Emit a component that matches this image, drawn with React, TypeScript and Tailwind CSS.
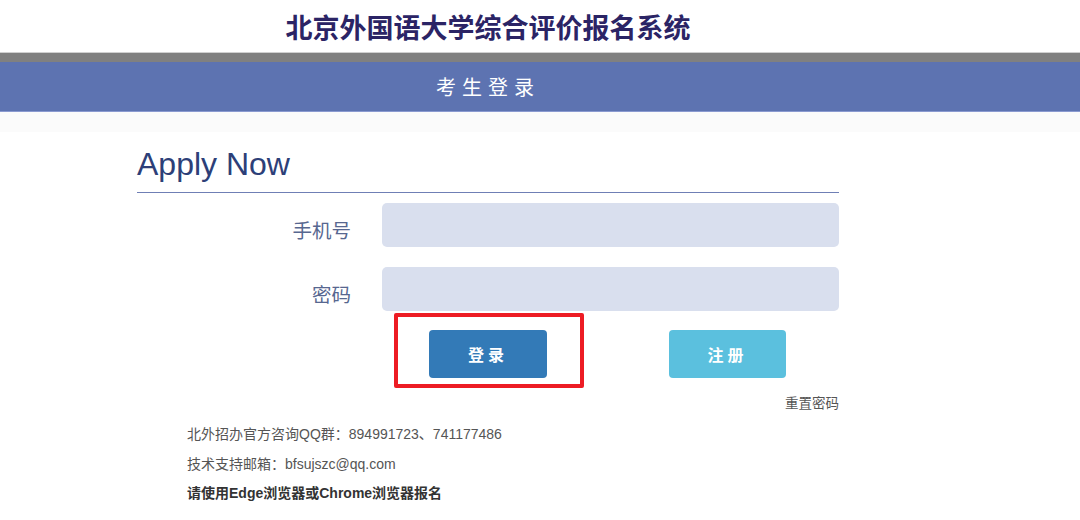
const App = () => {
    return (
        <div className="min-h-[520px] bg-white font-['Liberation_Sans','Noto_Sans_CJK_SC',sans-serif]">
            <div className="w-[976px]">
                <h1 className="h-[52px] pt-[9px] text-center text-[27px] leading-[36px] font-bold text-[#2b2465] font-['Noto_Sans_CJK_SC',sans-serif]">
                    北京外国语大学综合评价报名系统
                </h1>
            </div>
            <div className="h-[10px] bg-[#808080] border-t border-[#d0d0d0]" />
            <div className="h-[50px] bg-[#5d73b1] border-b border-[#8a9ad0]">
                <div className="w-[976px] text-center text-[20px] leading-[50px] tracking-[6px] text-white font-['Noto_Sans_CJK_SC',sans-serif]">
                    考生登录
                </div>
            </div>
            <div className="h-[20px] bg-[#fbfbfb]" />

            <div className="w-[976px]">
                <div className="w-[702px] mx-auto pt-[12px]">
                    <h2 className="text-[32px] leading-[40px] text-[#2d3f78] pb-[8px] border-b border-[#6f7fb5]">
                        Apply Now
                    </h2>

                    <div className="flex flex-col gap-[20px] mt-[10px]">
                        <div className="flex items-center">
                            <label className="w-[245px] pr-[31px] pt-[10px] text-right text-[19.5px] text-[#576790] font-['Noto_Sans_CJK_SC',sans-serif]">手机号</label>
                            <input className="w-[457px] h-[44px] rounded-[5px] bg-[#d9dfee] outline-none px-3" />
                        </div>
                        <div className="flex items-center">
                            <label className="w-[245px] pr-[31px] pt-[10px] text-right text-[19.5px] text-[#576790] font-['Noto_Sans_CJK_SC',sans-serif]">密码</label>
                            <input type="password" className="w-[457px] h-[44px] rounded-[5px] bg-[#d9dfee] outline-none px-3" />
                        </div>
                    </div>

                    <div className="flex mt-[19px] ml-[292px]">
                        <div className="relative">
                            <button className="w-[118px] h-[48px] rounded-[4px] bg-[#337ab7] text-white text-[16px] font-bold tracking-[4px] font-['Noto_Sans_CJK_SC',sans-serif]">
                                登录
                            </button>
                            <div className="absolute left-[-35px] top-[-17px] w-[190px] h-[75px] border-4 border-[#ed1c24] rounded-[2px]" />
                        </div>
                        <button className="ml-[122px] w-[117px] h-[48px] rounded-[4px] bg-[#5bc0de] text-white text-[16px] font-bold tracking-[4px] font-['Noto_Sans_CJK_SC',sans-serif]">
                            注册
                        </button>
                    </div>

                    <div className="mt-[17px] text-right text-[13.5px] leading-[18px] text-[#555]">重置密码</div>

                    <div className="ml-[50px] mt-[11px] text-[14px] text-[#555] leading-[20px] flex flex-col gap-[9.5px]">
                        <p>北外招办官方咨询QQ群：894991723、741177486</p>
                        <p>技术支持邮箱：bfsujszc@qq.com</p>
                        <p className="font-bold text-[#333]">请使用Edge浏览器或Chrome浏览器报名</p>
                    </div>
                </div>
            </div>
        </div>
    );
};

export default App;
